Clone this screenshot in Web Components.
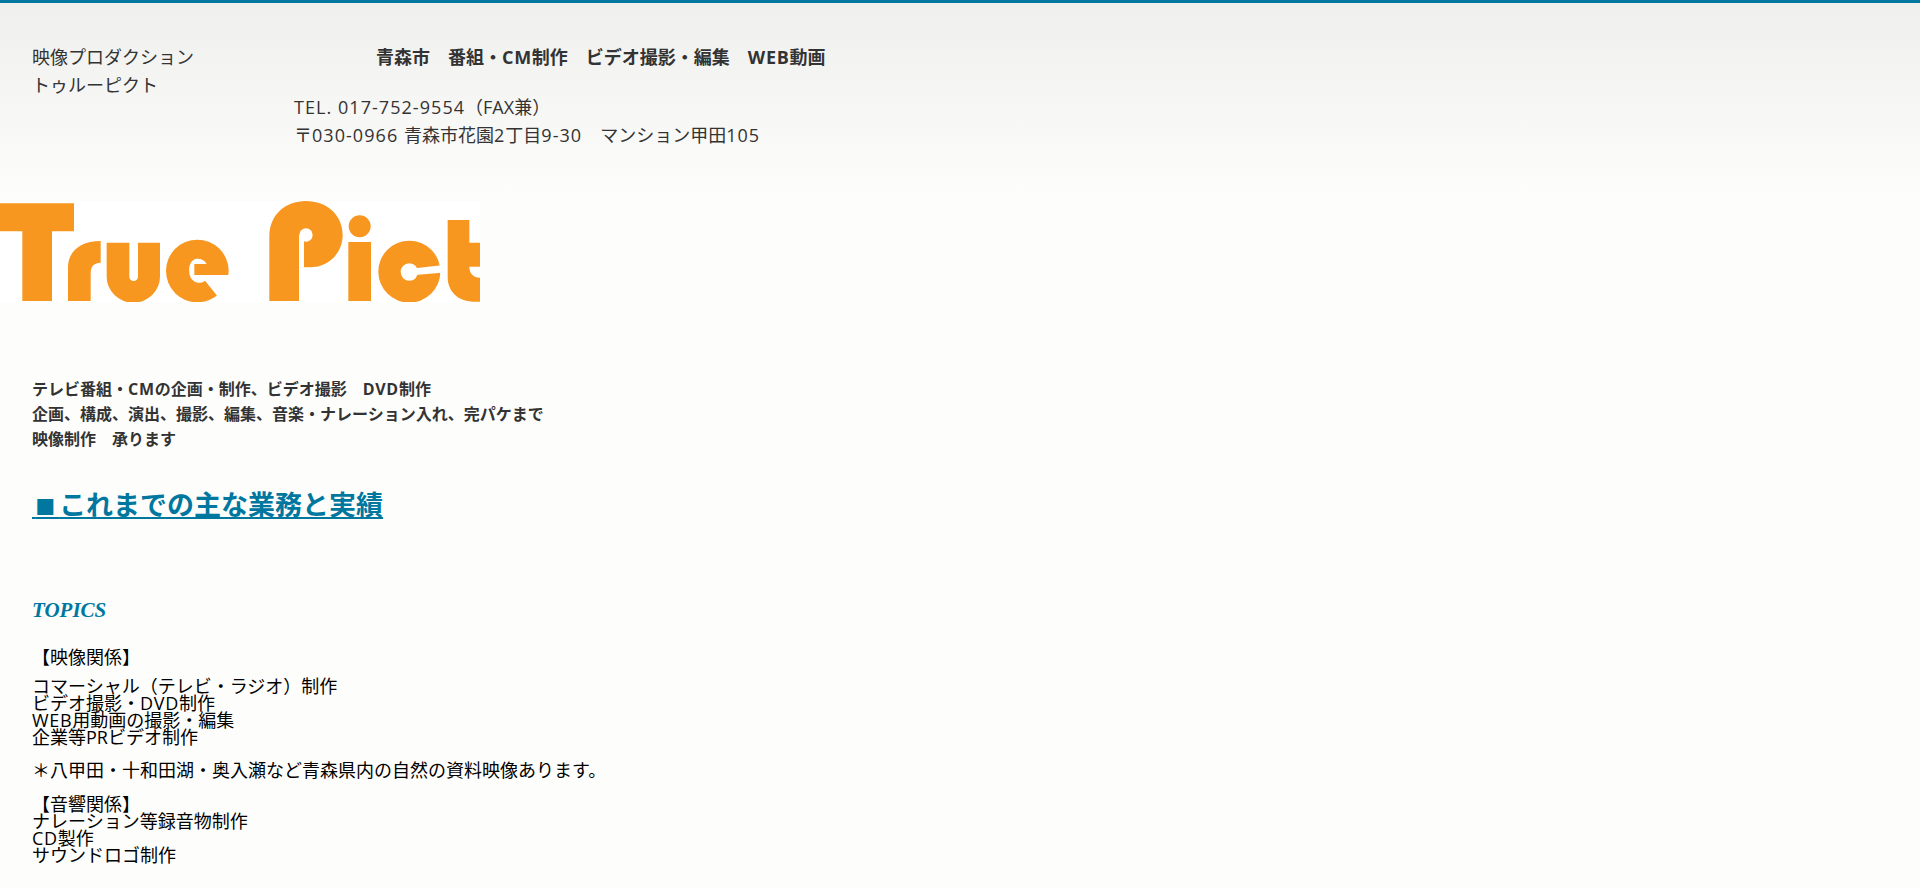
<!DOCTYPE html>
<html lang="ja">
<head>
<meta charset="utf-8">
<title>True Pict</title>
<style>
  html, body { margin: 0; padding: 0; }
  body {
    background: #fdfdfb;
    font-family: "Open Sans", "Noto Sans CJK JP", sans-serif;
  }
  .wide { letter-spacing: 1.05px; }
  .w { letter-spacing: 0.7px; }
</style>
</head>
<body>
<site-header>
  <span slot="name">映像プロダクション<br>トゥルーピクト</span>
  <span slot="nav">青森市　番組・<span class="w">CM</span>制作　ビデオ撮影・編集　<span class="w">WEB</span>動画</span>
  <span slot="tel"><span class="wide">TEL. 017-752-9554</span>（FAX兼）</span>
  <span slot="address">〒<span class="wide">030-0966 </span>青森市花園<span class="wide">2</span>丁目<span class="wide">9-30</span>　マンション甲田<span class="wide">105</span></span>
</site-header>
<site-logo></site-logo>
<intro-block href="#works" heading="これまでの主な業務と実績">
  テレビ番組・<span class="w">CM</span>の企画・制作、ビデオ撮影　<span class="w">DVD</span>制作<br>
  企画、構成、演出、撮影、編集、音楽・ナレーション入れ、完パケまで<br>
  映像制作　承ります
</intro-block>
<topics-list>
  <p class="one">【映像関係】</p>
  <div class="two">コマーシャル（テレビ・ラジオ）制作<br>ビデオ撮影・<span class="w">DVD</span>制作<br><span class="w">WEB</span>用動画の撮影・編集<br>企業等PRビデオ制作</div>
  <p class="three">＊八甲田・十和田湖・奥入瀬など青森県内の自然の資料映像あります。</p>
  <div class="four">【音響関係】<br>ナレーション等録音物制作<br><span class="w">CD</span>製作<br>サウンドロゴ制作</div>
</topics-list>

<script>
class SiteHeader extends HTMLElement {
  constructor() {
    super();
    this.attachShadow({ mode: "open" });
    this.shadowRoot.innerHTML = `
    <style>
      :host {
        display: flex;
        box-sizing: border-box;
        height: 201px;
        padding: 40px 0 0 32px;
        border-top: 3px solid #00779f;
        background: linear-gradient(#efefee, #fdfdfb);
        color: #333;
        font-size: 18px;
        line-height: 28px;
      }
      .name { width: 262px; }
      .nav { padding-left: 82px; margin-bottom: 22px; font-weight: bold; }
    </style>
    <div class="name"><slot name="name"></slot></div>
    <div>
      <div class="nav"><slot name="nav"></slot></div>
      <div><slot name="tel"></slot></div>
      <div><slot name="address"></slot></div>
    </div>
    `;
  }
}
customElements.define("site-header", SiteHeader);

class SiteLogo extends HTMLElement {
  constructor() {
    super();
    this.attachShadow({ mode: "open" });
    this.shadowRoot.innerHTML = `
    <style>
      :host { display: block; height: 101px; }
      svg { display: block; width: 480px; height: 101px; background: #fff; }
    </style>
    <svg viewBox="0 33 1440 303" role="img" aria-label="True Pict" fill="#f8971f">
      <path d="M0 40H222V124H156V333H67V124H0Z"/>
      <path d="M204 333V232C204 185 240 153 302 153V218C283 218 272 228 272 250V333Z"/>
      <path d="M320 158H388V260A13 13 0 0 0 414 260V158H480V260A80 78 0 0 1 320 260Z"/>
      <circle cx="592" cy="243" r="94"/>
      <path d="M620 222C612 208 596 204 584 208C570 214 566 232 568 248C570 268 585 280 600 278C608 277 612 274 615 272L652 318H720V255H583V222Z" fill="#fff"/>
      <path d="M808 333V140C808 75 855 33 918 33C980 33 1028 75 1028 135C1028 190 985 232 930 232H897V333Z"/>
      <rect x="897" y="135" width="15" height="98" fill="#fff"/>
      <circle cx="918" cy="135" r="20" fill="#fff"/>
      <circle cx="1079" cy="108.500" r="33"/>
      <rect x="1045" y="156" width="68" height="177"/>
      <circle cx="1228" cy="245" r="93"/>
      <circle cx="1228" cy="246" r="26" fill="#fff"/>
      <path d="M1245 235L1325 226V248L1245 255Z" fill="#fff"/>
      <path d="M1343 90H1408V158H1440V335H1420C1375 335 1343 305 1343 262Z"/>
      <path d="M1408 230H1440V263C1420 263 1408 250 1408 230Z" fill="#fff"/>
    </svg>
    `;
  }
}
customElements.define("site-logo", SiteLogo);

class IntroBlock extends HTMLElement {
  constructor() {
    super();
    this.attachShadow({ mode: "open" });
    this.shadowRoot.innerHTML = `
    <style>
      :host {
        display: block;
        padding: 75px 0 0 32px;
        color: #333;
      }
      .copy { font-size: 16px; font-weight: bold; line-height: 25px; }
      a {
        display: inline-block;
        margin-top: 33px;
        color: #00779f;
        font-size: 27px;
        font-weight: bold;
        line-height: 40px;
      }
      .pre { font-size: 12px; }
      .mark { font-size: 20px; letter-spacing: 4px; }
    </style>
    <div class="copy"><slot></slot></div>
    <a id="link"><span class="pre">&nbsp;</span><span class="mark">■</span><span id="text"></span></a>
    `;
  }
  connectedCallback() {
    this.shadowRoot.getElementById("link").href = this.getAttribute("href");
    this.shadowRoot.getElementById("text").textContent = this.getAttribute("heading");
  }
}
customElements.define("intro-block", IntroBlock);

class TopicsList extends HTMLElement {
  constructor() {
    super();
    this.attachShadow({ mode: "open" });
    this.shadowRoot.innerHTML = `
    <style>
      :host {
        display: block;
        padding: 67px 0 0 32px;
        color: #000;
        font-size: 18px;
        line-height: 17px;
      }
      h2 {
        margin: 0 0 27px;
        color: #00779f;
        font: italic bold 21px/24px "Liberation Serif", serif;
      }
      ::slotted(p) { margin: 17px 0 17px; }
      ::slotted(.one) { margin: 0 0 12px; }
      ::slotted(.three) { margin-top: 16px; }
    </style>
    <h2>TOPICS</h2>
    <slot></slot>
    `;
  }
}
customElements.define("topics-list", TopicsList);
</script>
</body>
</html>
